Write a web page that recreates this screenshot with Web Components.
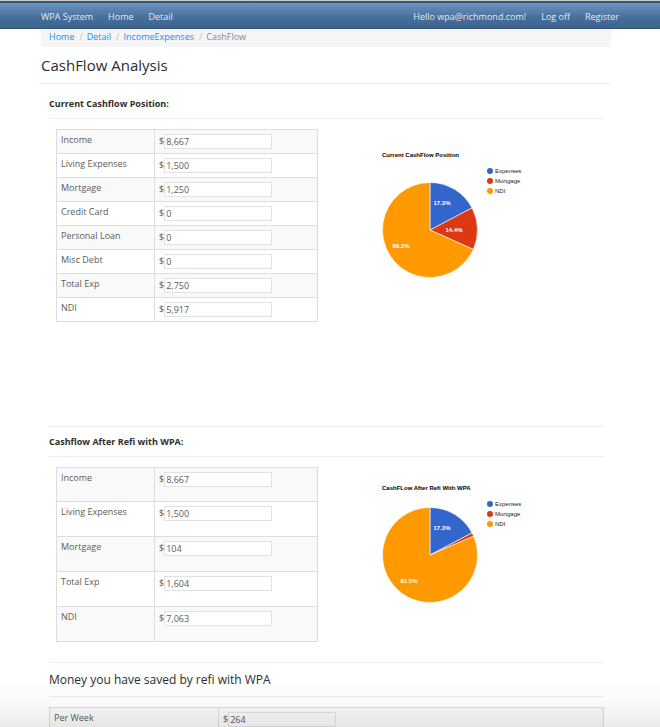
<!DOCTYPE html>
<html lang="en">
<head>
<meta charset="utf-8">
<meta name="viewport" content="width=device-width, initial-scale=1">
<title>CashFlow</title>
<style>
html { scrollbar-width: none; }
body { margin: 0; background: #fff; color: #5c5c5c; font: 9px/14px "Open Sans", sans-serif; }
</style>
</head>
<body>
<wpa-page></wpa-page>

<script>
const define = (name, html, setup) => customElements.define(name, class extends HTMLElement {
  connectedCallback() {
    if (this.shadowRoot) return;
    const template = document.createElement('template');
    template.innerHTML = html;
    this.attachShadow({ mode: 'open' }).append(template.content.cloneNode(true));
    if (setup) setup(this, this.shadowRoot);
  }
});

define('wpa-nav', `
<style>
:host { display: block; box-sizing: border-box; height: 29px; border-top: 1px solid #ccc; }
nav { box-sizing: border-box; height: 28px; display: flex; align-items: center; gap: 15px; padding: 2px 41px 0;
  border-top: 2px solid #365474; border-bottom: 1px solid #345578;
  background: linear-gradient(#6d94bf, #446e9b 60%, #3e648d); }
a { color: #e6eaef; text-decoration: none; white-space: nowrap; }
.right { margin-left: auto; }
</style>
<nav aria-label="Main">
  <a href="#">WPA System</a><a href="#">Home</a><a href="#">Detail</a>
  <a class="right" href="#">Hello wpa@richmond.com!</a><a href="#">Log off</a><a href="#">Register</a>
</nav>`);

define('wpa-breadcrumb', `
<style>
:host { display: block; }
ol { display: flex; list-style: none; margin: 0; padding: 1px 8px 3px; background: #f5f5f5; border-radius: 0 0 2px 2px; }
li + li::before { content: "/"; color: #bbb; padding: 0 4px 0 5px; }
li { color: #888; }
a { color: #2a8af0; text-decoration: none; }
</style>
<ol>
  <li><a href="#">Home</a></li><li><a href="#">Detail</a></li><li><a href="#">IncomeExpenses</a></li><li>CashFlow</li>
</ol>`);

define('wpa-section', `
<style>
:host { display: block; padding: 0 7px 0 8px; }
header { box-sizing: border-box; height: 31px; padding: 8px 0; border-bottom: 1px solid #eee; color: #2d2d2d; }
:host([ruled]) header { border-top: 1px solid #eee; }
:host([large]) header { height: 35px; padding: 9px 0; }
h2 { margin: 0; font-size: 9px; line-height: 14px; font-weight: 700; }
:host([large]) h2 { font-size: 12px; line-height: 16px; font-weight: 400; }
:host(:not([ruled])) header { padding-top: 9px; }
.body { padding-top: 10px; }
</style>
<header><h2><slot name="title"></slot></h2></header>
<div class="body"><slot></slot></div>`);

define('wpa-split', `
<style>
:host { display: grid; grid-template-columns: 1fr 1fr; gap: 16px; padding: 0 8px 0 7px; align-items: start; }
</style>
<slot></slot>`);

define('money-table', `
<style>
:host { display: block; --row: 24px; --first: 24px; --label: 98px; }
:host([tall]) { --row: 35px; --first: 34px; }
:host([wide]) { --label: 169px; }
table { width: 100%; border-collapse: collapse; table-layout: fixed; border: 1px solid #ddd; }
tr { height: var(--row); }
tr:first-child { height: var(--first); }
tr:nth-child(odd) { background: #f9f9f9; }
th, td { box-sizing: border-box; border: 1px solid #ddd; padding: 3px 4px; text-align: left; vertical-align: top; font-weight: 400; line-height: 14px; }
th { width: var(--label); }
td { padding: 4px 4px 0; }
label { display: block; }
.amount { display: flex; }
input { box-sizing: border-box; width: 108px; height: 15px; margin: 0; padding: 0 1px 1px; border: 1px solid #e2e2e2; border-radius: 0;
  background: #fff; color: inherit; font: inherit; }
:host([wide]) input { background: #f9f9f9; }
</style>
<table><tbody></tbody></table>`, (host, root) => {
  const body = root.querySelector('tbody');
  host.getAttribute('rows').split(';').forEach((row, i) => {
    const [label, value] = row.split('=');
    const tr = body.insertRow();
    tr.innerHTML = `<th scope="row"><label for="f${i}">${label}</label></th><td><div class="amount"><span>$</span><input id="f${i}" type="text" value="${value}"></div></td>`;
  });
});

define('pie-chart', `
<style>
:host { display: block; padding: 21px 0 0 48px; font: 6px/10px "Liberation Sans", sans-serif; color: #222; }
h3 { margin: 0; font-size: 6px; line-height: 10px; font-weight: 700; color: #000; white-space: nowrap; }
.plot { display: flex; gap: 9px; padding-top: 6px; }
svg { display: block; width: 96px; height: 96px; margin-top: 16px; flex: none; overflow: visible; }
:host([raised]) svg { margin-top: 8px; }
:host([raised]) { padding-top: 16px; }
path { stroke: #fff; stroke-width: .6; }
text { fill: #fff; font: 700 6px "Liberation Sans", sans-serif; text-anchor: middle; }
ul { list-style: none; margin: 0; padding: 0; }
li { display: flex; align-items: center; gap: 2px; height: 10px; }
i { width: 6px; height: 6px; border-radius: 50%; }
</style>
<h3></h3>
<div class="plot"><svg viewBox="-48 -48 96 96" role="img"></svg><ul></ul></div>`, (host, root) => {
  const colors = ['#3366cc', '#dc3912', '#ff9900'];
  const names = ['Expenses', 'Mortgage', 'NDI'];
  const radius = 47.5;
  const spots = host.getAttribute('labels').split(',');
  const point = t => [Math.sin(t * 2 * Math.PI) * radius, -Math.cos(t * 2 * Math.PI) * radius].map(n => n.toFixed(2)).join(' ');
  let turn = 0;
  let slices = '', labels = '';
  root.querySelector('h3').textContent = host.getAttribute('heading');
  host.getAttribute('values').split(',').map(Number).forEach((value, i) => {
    const end = turn + value / 100;
    slices += `<path fill="${colors[i]}" d="M0 0L${point(turn)}A${radius} ${radius} 0 ${value > 50 ? 1 : 0} 1 ${point(end)}Z"/>`;
    if (spots[i]) {
      const [x, y] = spots[i].split(' ');
      labels += `<text x="${x}" y="${y}">${value}%</text>`;
    }
    turn = end;
  });
  root.querySelector('svg').innerHTML = slices + labels;
  root.querySelector('svg').setAttribute('aria-label', host.getAttribute('heading'));
  root.querySelector('ul').innerHTML = names.map((n, i) => `<li><i style="background:${colors[i]}"></i>${n}</li>`).join('');
});

define('wpa-page', `
<style>
:host { display: block; }
main { padding: 0 49px 0 41px; }
h1 { margin: 0; padding: 8px 0; font-size: 15px; line-height: 20px; font-weight: 400; color: #2d2d2d; border-bottom: 1px solid #eee; }
.current { padding-top: 4px; min-height: 338px; }
.after { min-height: 236px; }
.fade { position: fixed; left: 0; right: 0; bottom: 0; height: 50px; pointer-events: none;
  background: linear-gradient(transparent, rgba(0,0,0,.02) 50%, rgba(0,0,0,.08)); }
</style>
<wpa-nav></wpa-nav>
<main>
  <wpa-breadcrumb></wpa-breadcrumb>
  <h1>CashFlow Analysis</h1>
  <wpa-section class="current">
    <span slot="title">Current Cashflow Position:</span>
    <wpa-split>
      <money-table rows="Income=8,667;Living Expenses=1,500;Mortgage=1,250;Credit Card=0;Personal Loan=0;Misc Debt=0;Total Exp=2,750;NDI=5,917"></money-table>
      <pie-chart heading="Current CashFlow Position" values="17.3,14.4,68.3" labels="12 -25,24 2,-29 18"></pie-chart>
    </wpa-split>
  </wpa-section>
  <wpa-section class="after" ruled>
    <span slot="title">Cashflow After Refi with WPA:</span>
    <wpa-split>
      <money-table tall rows="Income=8,667;Living Expenses=1,500;Mortgage=104;Total Exp=1,604;NDI=7,063"></money-table>
      <pie-chart raised heading="CashFLow After Refi With WPA" values="17.3,1.2,81.5" labels="12 -25,,-21 28"></pie-chart>
    </wpa-split>
  </wpa-section>
  <wpa-section ruled large>
    <span slot="title">Money you have saved by refi with WPA</span>
    <money-table wide rows="Per Week=264"></money-table>
  </wpa-section>
</main>
<div class="fade"></div>`);
</script>
</body>
</html>
